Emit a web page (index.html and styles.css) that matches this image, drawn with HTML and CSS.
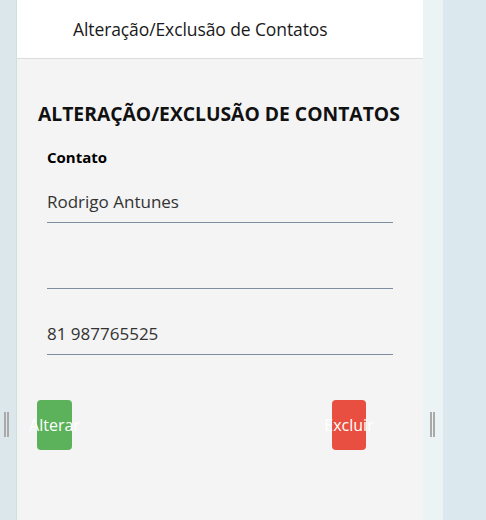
FILE: index.html
```html
<!DOCTYPE html>
<html lang="pt-BR">
<head>
<meta charset="utf-8">
<title>Alteração/Exclusão de Contatos</title>
<link rel="stylesheet" href="styles.css">
</head>
<body>
<div class="layout">
  <div class="side-left"><span class="grip"></span></div>
  <main class="panel">
    <header class="topbar">
      <h1 class="topbar-title">Alteração/Exclusão de Contatos</h1>
    </header>
    <section class="content">
      <h2 class="page-title">ALTERAÇÃO/EXCLUSÃO DE CONTATOS</h2>
      <form class="form">
        <label class="label">Contato</label>
        <div class="field first"><span class="value">Rodrigo Antunes</span></div>
        <div class="field"><span class="value"></span></div>
        <div class="field"><span class="value">81 987765525</span></div>
        <div class="actions">
          <span class="btn btn-green">Alterar</span>
          <span class="btn btn-red">Excluir</span>
        </div>
      </form>
    </section>
  </main>
  <div class="side-right"><span class="grip"></span></div>
  <div class="side-far"></div>
</div>
</body>
</html>
```
FILE: styles.css
```css
html, body {
  margin: 0;
  padding: 0;
  height: 100%;
}
body {
  font-family: "Open Sans", "Noto Sans", sans-serif;
  color: #111;
  background: #dbe7eb;
}
.layout {
  display: flex;
  height: 520px;
}
.side-left {
  width: 17px;
  flex: none;
  background: #dbe7ea;
  border-right: 1px solid #d0dee2;
  padding-top: 412px;
  box-sizing: border-box;
}
.side-left .grip {
  margin-left: 4px;
}
.grip {
  display: block;
  width: 1px;
  height: 25px;
  border-left: 2px solid #aaa;
  border-right: 2px solid #aaa;
}
.panel {
  width: 406px;
  flex: none;
  background: #f4f4f4;
  display: flex;
  flex-direction: column;
}
.topbar {
  background: #fff;
  height: 58px;
  border-bottom: 1px solid #dcdcdc;
  display: flex;
  align-items: center;
  padding-left: 56px;
}
.topbar-title {
  margin: 0;
  font-size: 17.5px;
  font-weight: 400;
  color: #1a1a1a;
  letter-spacing: -0.1px;
}
.content {
  padding: 42px 0 0 21px;
}
.page-title {
  margin: 0;
  font-size: 19.3px;
  font-weight: 700;
  color: #111;
  line-height: 26px;
}
.form {
  padding-left: 9px;
  width: 346px;
  display: flex;
  flex-direction: column;
  margin-top: 20px;
}
.label {
  font-size: 15px;
  font-weight: 700;
  color: #000;
  line-height: 20px;
}
.field {
  height: 66px;
  border-bottom: 1px solid #808ca0;
  display: flex;
  align-items: flex-end;
  padding-bottom: 8px;
  box-sizing: border-box;
}
.field.first {
  height: 56px;
}
.value {
  font-size: 17px;
  color: #333;
  line-height: 24px;
}
.actions {
  display: flex;
  justify-content: space-between;
  margin-top: 45px;
  margin-left: -10px;
  width: 329px;
}
.btn {
  width: 35px;
  height: 50px;
  border-radius: 4px;
  color: #fff;
  font-size: 16px;
  display: flex;
  align-items: center;
  justify-content: center;
  white-space: nowrap;
}
.btn-green {
  background: #5cb25a;
}
.btn-red {
  background: #e94f40;
  width: 34px;
}
.side-right {
  width: 20px;
  flex: none;
  background: #ebf3f5;
  padding-top: 412px;
  box-sizing: border-box;
}
.side-right .grip {
  margin-left: 7px;
}
.side-far {
  flex: 1;
  background: #dbe9ee;
}
```
